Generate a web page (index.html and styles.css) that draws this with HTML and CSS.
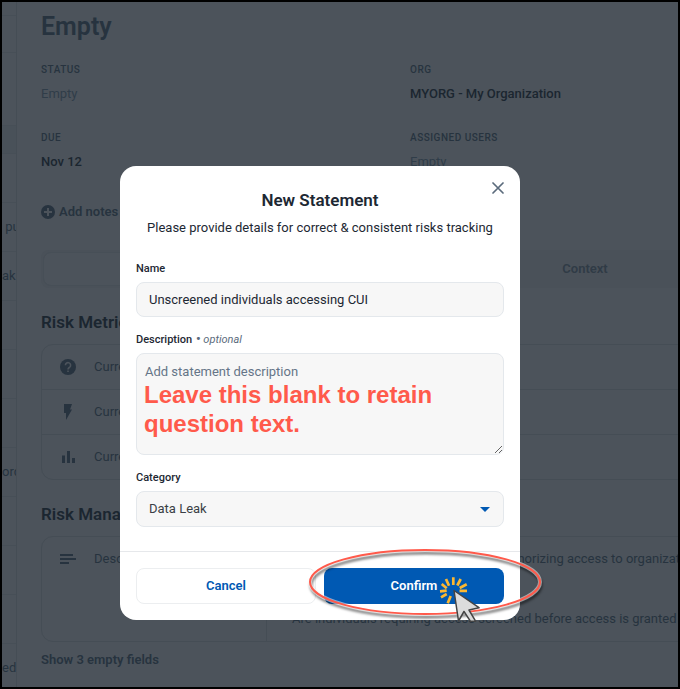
FILE: index.html
```html
<!DOCTYPE html>
<html lang="en">
<head>
	<meta charset="UTF-8">
	<title>New Statement</title>
	<link rel="stylesheet" href="styles.css">
</head>
<body>
	<div class="page">
		<ul class="list">
			<li class="gap-top"></li>
			<li class="toolbar"></li>
			<li class="filters"></li>
			<li class="heading"></li>
			<li></li>
			<li>&nbsp;pu</li>
			<li>ak</li>
			<li></li>
			<li></li>
			<li></li>
			<li>ord</li>
			<li></li>
			<li></li>
			<li></li>
			<li>edi</li>
		</ul>
		<main class="sheet">
			<h1>Empty</h1>
			<dl class="facts">
				<div><dt>STATUS</dt><dd class="empty">Empty</dd></div>
				<div><dt>ORG</dt><dd>MYORG - My Organization</dd></div>
				<div><dt>DUE</dt><dd>Nov 12</dd></div>
				<div><dt>ASSIGNED USERS</dt><dd class="empty">Empty</dd></div>
			</dl>
			<button type="button" class="notes">
				<svg width="14" height="14" viewBox="0 0 14 14"><circle cx="7" cy="7" r="7" fill="#27333f"/><path d="M7 3v8M3 7h8" stroke="#4c535b" stroke-width="2"/></svg>
				Add notes
			</button>
			<div class="tabs">
				<button type="button" class="selected" aria-label="Details"></button>
				<button type="button">Context</button>
			</div>
			<h2>Risk Metrics</h2>
			<ul class="card metrics">
				<li>
					<svg width="16" height="16" viewBox="0 0 16 16"><circle cx="8" cy="8" r="8" fill="#27333f"/><path d="M5.400 6.200a2.600 2.600 0 1 1 4.300 2C8.600 9 8 9.200 8 10.500" fill="none" stroke="#4c535b" stroke-width="1.600"/><path d="M7.200 11.500h1.600v1.600H7.200z" fill="#4c535b"/></svg>
					Current
				</li>
				<li>
					<svg width="16" height="16" viewBox="0 0 16 16"><path d="M4 0h8L10 5.500h2L6 16V9H4z" fill="#27333f"/></svg>
					Current
				</li>
				<li>
					<svg width="16" height="16" viewBox="0 0 16 16"><path d="M2 6.500h3V14H2zM7 2h3v12H7zM12 9h3v5h-3z" fill="#27333f"/></svg>
					Current
				</li>
			</ul>
			<h2>Risk Management</h2>
			<div class="card detail">
				<div class="detail-label">
					<svg width="16" height="10" viewBox="0 0 16 10"><path d="M0 1h13M0 5h16M0 9h9" stroke="#27333f" stroke-width="2"/></svg>
					Description
				</div>
				<div class="detail-text">
					<p>Screening of the individuals prior to authorizing access to organizational systems</p>
					<p>Are individuals requiring access screened before access is granted</p>
				</div>
			</div>
			<button type="button" class="more">Show 3 empty fields</button>
		</main>
	</div>

	<div class="overlay">
		<form class="modal" role="dialog" aria-labelledby="modal-title">
			<button type="button" class="close" aria-label="Close">
				<svg width="12" height="12" viewBox="0 0 12 12"><path d="M1 1l10 10M11 1L1 11" stroke="#5b6b7c" stroke-width="1.700" stroke-linecap="round"/></svg>
			</button>
			<div class="modal-body">
				<h2 id="modal-title">New Statement</h2>
				<p class="lead">Please provide details for correct &amp; consistent risks tracking</p>
				<div class="field">
					<label for="name">Name</label>
					<input id="name" type="text" value="Unscreened individuals accessing CUI">
				</div>
				<div class="field">
					<label for="description">Description <i><b>•</b> <em>optional</em></i></label>
					<textarea id="description" placeholder="Add statement description"></textarea>
					<p class="hint">Leave this blank to retain question text.</p>
				</div>
				<div class="field">
					<label for="category">Category</label>
					<div class="select">
						<select id="category"><option>Data Leak</option></select>
						<svg width="10" height="5" viewBox="0 0 10 5"><path d="M0 0h10L5 5z" fill="#0059b3"/></svg>
					</div>
				</div>
			</div>
			<div class="modal-footer">
				<button type="button" class="cancel">Cancel</button>
				<div class="confirm-wrap">
					<button type="submit" class="confirm">Confirm</button>
					<svg class="callout" width="240" height="84" viewBox="0 0 240 84">
						<ellipse cx="119" cy="38" rx="115" ry="32" fill="none" stroke="#fff" stroke-opacity=".5" stroke-width="4"/>
						<ellipse cx="119" cy="38" rx="115" ry="32" fill="none" stroke="#ff5a4b" stroke-width="2"/>
					</svg>
					<svg class="pointer" width="46" height="48" viewBox="0 0 46 48">
						<path d="M17.300 3.300V11M24.700 5l-3.400 6.500M30.700 10.300l-7 3.700M31 16.800h-7.500M10 5l3 6.700M5.700 10l5 4.300M4 17.300l6.700-.6M5 23.300l5.700-3.300M11.700 29.300l3-7.300" stroke="#fbb731" stroke-width="2.700"/>
						<path d="M18 16.500L43 33.700 33 36 39.700 47.300H34.500L28 37.500 22.500 47z" fill="#dcdcdc" stroke="#444" stroke-width="1.500" stroke-linejoin="round"/>
					</svg>
				</div>
			</div>
		</form>
	</div>
</body>
</html>
```
FILE: styles.css
```css
*{
	box-sizing: border-box;
	margin: 0;
	padding: 0;
}
ul{
	list-style: none;
}
body{
	height: 100vh;
	overflow: hidden;
	background-color: #4c535b;
	color: #1b2630;
	font: 13px/20px Roboto, "Noto Sans", sans-serif;
}
button, input, textarea, select{
	font: inherit;
	color: inherit;
}
button{
	border: none;
	background: none;
	cursor: pointer;
}
.page{
	height: 100%;
	display: flex;
	border: 2px solid #000;
	overflow: hidden;
}
.list{
	flex: 0 0 15px;
	overflow: hidden;
	border-right: 1px solid #454d55;
	color: #27333f;
}
.list li{
	height: 49px;
	line-height: 48px;
	border-bottom: 1px solid #474f57;
	white-space: nowrap;
}
.list .gap-top{
	height: 14px;
}
.list .toolbar{
	height: 37px;
}
.list .filters{
	height: 73px;
}
.list .heading{
	height: 28px;
	background-color: #495159;
}
.sheet{
	flex: 1;
	min-width: 0;
	padding: 8px 0 0 24px;
	margin-right: -89px;
}
.sheet h1{
	font-size: 25px;
	line-height: 34px;
	font-weight: 600;
	color: #27333f;
}
.facts{
	display: grid;
	grid-template-columns: 1fr 1fr;
	column-gap: 12px;
	row-gap: 24px;
	margin-top: 19px;
}
.facts dt{
	font-size: 10px;
	line-height: 14px;
	font-weight: 500;
	letter-spacing: .05em;
	color: #27333f;
}
.facts dd{
	margin-top: 5px;
	line-height: 24px;
	font-weight: 500;
}
.facts div{
	padding-bottom: 1px;
}
.facts .empty{
	font-weight: 400;
	color: #303d49;
}
.notes{
	display: flex;
	align-items: center;
	gap: 4px;
	margin-top: 27px;
	font-weight: 600;
	color: #27333f;
}
.tabs{
	display: flex;
	height: 38px;
	margin-top: 28px;
	padding: 2px;
	border-radius: 8px;
	background-color: #4a5159;
}
.tabs button{
	flex: 1;
	font-weight: 600;
	color: #303b46;
}
.tabs .selected{
	border: 1px solid #474f57;
	border-radius: 8px;
	background-color: #4c535b;
}
.sheet h2{
	margin: 22px 0 10px;
	font-size: 17px;
	line-height: 24px;
	font-weight: 600;
}
.card{
	border: 1px solid #454d55;
	border-radius: 12px;
	color: #27333f;
}
.metrics li{
	display: flex;
	align-items: center;
	gap: 18px;
	height: 45px;
	padding-left: 18px;
}
.metrics li:first-child{
	height: 44px;
}
.metrics li + li{
	border-top: 1px solid #454d55;
}
.detail{
	display: flex;
	height: 106px;
}
.detail-label{
	flex: 0 0 225px;
	display: flex;
	align-items: center;
	align-self: stretch;
	gap: 18px;
	padding: 12px 0 72px 18px;
	border-right: 1px solid #454d55;
}
.detail-text{
	padding: 12px 0 0 25px;
	white-space: nowrap;
}
.detail-text p{
	margin-bottom: 40px;
}
.more{
	display: block;
	margin-top: 8px;
	font-weight: 600;
	color: #27333f;
}

/* dialog */
.overlay{
	position: absolute;
	inset: 0;
	display: flex;
	justify-content: center;
	align-items: flex-start;
	padding: 166px 40px 0 0;
}
.modal{
	position: relative;
	width: 100%;
	max-width: 400px;
	border-radius: 16px;
	background-color: #fff;
	color: #1d2833;
}
.close{
	position: absolute;
	top: 12px;
	right: 12px;
	width: 20px;
	height: 20px;
	line-height: 0;
}
.modal-body{
	padding: 22px 16px 24px;
}
.modal-body h2{
	font-size: 17px;
	line-height: 24px;
	font-weight: 600;
	text-align: center;
}
.lead{
	margin: 6px 0 23px;
	text-align: center;
}
.field{
	position: relative;
	margin-top: 15px;
}
.lead + .field{
	margin-top: 0;
}
.field label{
	display: block;
	margin-bottom: 5px;
	font-size: 11px;
	line-height: 16px;
	font-weight: 500;
}
.field i{
	margin-left: 1px;
	font-style: normal;
	color: #5b6b7c;
}
.field b{
	font-size: 13px;
	line-height: 1;
}
.field em{
	font-style: italic;
	font-weight: 400;
}
.field input, .field textarea, .field select{
	display: block;
	width: 100%;
	height: 36px;
	padding: 0 12px;
	border: 1px solid #e4e8ec;
	border-radius: 8px;
	background-color: #f7f7f7;
	outline: none;
}
.field input{
	height: 35px;
}
.field textarea{
	height: 102px;
	padding: 8px;
}
.field textarea::placeholder{
	color: #657587;
}
.field select{
	appearance: none;
	color: #3a3f45;
}
.select{
	display: grid;
	align-items: center;
}
.select select, .select svg{
	grid-area: 1 / 1;
}
.select svg{
	justify-self: end;
	margin-right: 14px;
	pointer-events: none;
}
.hint{
	position: absolute;
	top: 48px;
	left: 8px;
	right: 40px;
	font: bold 24px/29px "Liberation Sans", Arial, sans-serif;
	color: #ff5a4b;
	pointer-events: none;
}
.modal-footer{
	display: grid;
	grid-template-columns: 1fr 1fr;
	gap: 8px;
	padding: 16px;
	border-top: 1px solid #e6e8eb;
}
.modal-footer button{
	width: 100%;
	height: 36px;
	border-radius: 8px;
	font-weight: 600;
}
.modal-footer .cancel{
	border: 1px solid #eceef0;
	color: #0059b3;
}
.confirm-wrap{
	position: relative;
}
.modal-footer .confirm{
	background-color: #0059b3;
	color: #fff;
}
.callout, .pointer{
	position: absolute;
	pointer-events: none;
}
.callout{
	top: -24px;
	left: -18px;
	filter: drop-shadow(1px 3px 1px rgba(0, 0, 0, .5));
}
.pointer{
	top: 6px;
	left: 112px;
}
```
